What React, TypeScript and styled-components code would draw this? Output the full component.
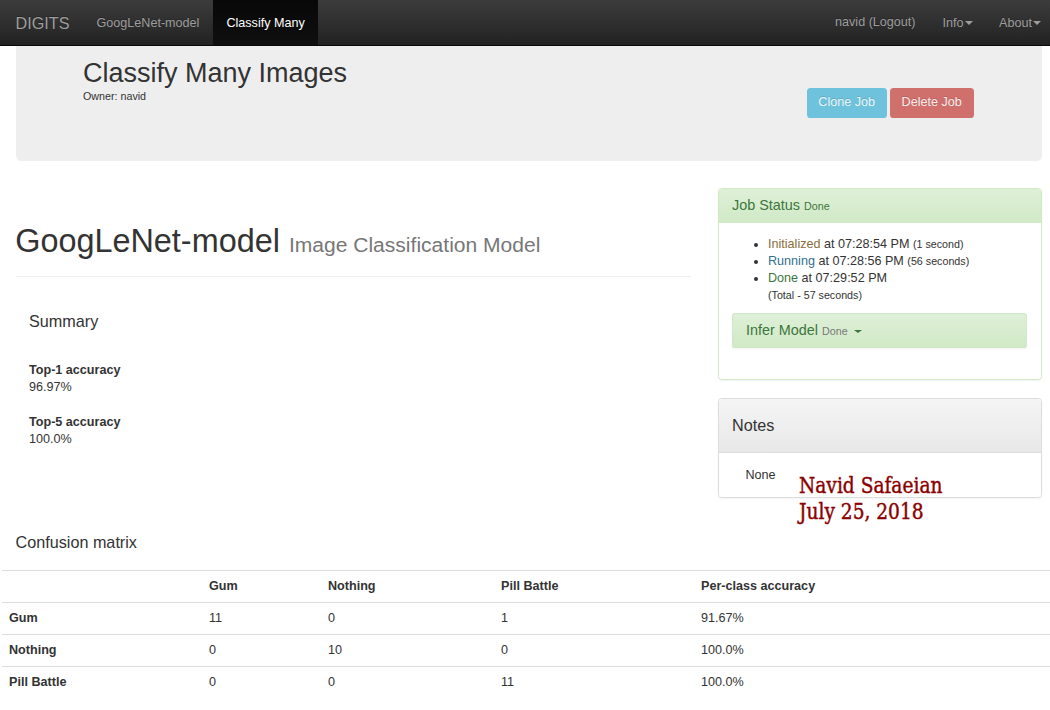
import React from "react";
import styled, { createGlobalStyle } from "styled-components";

const Global = createGlobalStyle`
  * { box-sizing: border-box; }
  html { overflow: hidden; }
  body {
    margin: 0;
    background: #fff;
    color: #333;
    font: 12.6px/17px "Liberation Sans", Arial, sans-serif;
    height: 710px;
    overflow: hidden;
  }
`;

const Navbar = styled.nav`
  display: flex;
  height: 46px;
  background: linear-gradient(#3c3c3c, #222);
  border-bottom: 1px solid #080808;
  color: #9d9d9d;
  text-shadow: 0 -1px 0 rgba(0, 0, 0, 0.25);
  white-space: nowrap;
`;

const Brand = styled.div`
  width: 83px;
  padding: 14px 0 0 15.5px;
  font-size: 16.2px;
  line-height: 18px;
`;

const NavItem = styled.div<{ $active?: boolean }>`
  padding: 15px 13.5px 0;
  color: ${(p) => (p.$active ? "#fff" : "#9d9d9d")};
  background: ${(p) => (p.$active ? "linear-gradient(#080808, #0f0f0f)" : "none")};
`;

const NavRight = styled.div`
  display: flex;
  margin-left: auto;
  padding-right: 9px;
`;

const NavText = styled.div`
  padding: 14px 13.5px 0;
`;

const Dropdown = styled.div`
  display: flex;
  gap: 1px;
  padding: 15px 0 0 13.5px;
  margin-right: 13px;
  &:last-child { margin-right: 0; }
`;

const Caret = styled.span`
  width: 0;
  height: 0;
  margin-top: 6px;
  border-top: 4px solid currentColor;
  border-left: 4px solid transparent;
  border-right: 4px solid transparent;
`;

const SmallCaret = styled(Caret)`
  display: inline-block;
  vertical-align: 2px;
  margin: 0 0 0 6px;
  border-width: 3px 4px 0;
`;

const Jumbotron = styled.header`
  display: flex;
  justify-content: space-between;
  height: 115px;
  margin: 0 8px 0 16px;
  padding: 12px 68px 0 67px;
  background: #eee;
  border-radius: 0 0 5.4px 5.4px;
`;

const PageTitle = styled.h2`
  margin: 0;
  font-size: 27px;
  line-height: 30px;
  font-weight: 400;
`;

const Small = styled.small`
  font-size: 10.71px;
`;

const Owner = styled.div`
  font-size: 10.71px;
  line-height: 16px;
`;

const Buttons = styled.div`
  display: flex;
  gap: 3px;
  margin-top: 30px;
`;

const Button = styled.button<{ $color: string; $width: number }>`
  width: ${(p) => p.$width}px;
  height: 30px;
  padding: 0 0.6px 2px 0;
  border: 0;
  border-radius: 3.6px;
  background: ${(p) => p.$color};
  color: rgba(255, 255, 255, 0.9);
  font: inherit;
  text-shadow: 0 -1px 0 rgba(0, 0, 0, 0.15);
`;

const Columns = styled.div`
  display: flex;
  justify-content: space-between;
  height: 345px;
  padding: 27px 8px 0 16px;
`;

const Main = styled.main`
  width: 675px;
`;

const ModelTitle = styled.h1`
  margin: 35px 0 0;
  height: 54px;
  border-bottom: 1px solid #eee;
  font-size: 32.4px;
  line-height: 36px;
  font-weight: 400;
  text-indent: -0.8px;
  small { font-size: 21.06px; color: #777; }
`;

const Summary = styled.section`
  padding: 34px 13px 0;
`;

const Heading = styled.h4`
  margin: 0;
  font-size: 16.2px;
  line-height: 20px;
  font-weight: 400;
`;

const Metrics = styled.dl`
  margin: 31px 0 0;
  dt { font-weight: 700; }
  dd { margin: 0 0 18px; }
`;

const Side = styled.aside`
  width: 324px;
`;

const Panel = styled.section<{ $success?: boolean }>`
  height: ${(p) => (p.$success ? 192 : 100)}px;
  margin-bottom: 18px;
  border: 1px solid ${(p) => (p.$success ? "#d0e9c6" : "#ddd")};
  border-radius: 3.6px;
  box-shadow: 0 1px 2px rgba(0, 0, 0, 0.05);
`;

const StatusHead = styled.div`
  height: 34px;
  padding: 7px 13px 0;
  border-radius: 2.6px 2.6px 0 0;
  background: linear-gradient(#dff0d8, #d0e9c6);
  color: #3c763d;
  font-size: 14.4px;
  line-height: 18px;
`;

const NotesHead = styled.div`
  height: 54px;
  padding: 16px 13px 0;
  border-bottom: 1px solid #ddd;
  border-radius: 2.6px 2.6px 0 0;
  background: linear-gradient(#f5f5f5, #e8e8e8);
`;

const NotesBody = styled.div`
  padding: 14px 26.5px;
`;

const History = styled.ul`
  margin: 13px 0 9px;
  padding: 0 0 0 49px;
  white-space: nowrap;
`;

const State = styled.span<{ $color: string }>`
  color: ${(p) => p.$color};
`;

const Task = styled.div`
  height: 35px;
  margin: 0 14px 0 13px;
  padding: 8px 14px 0;
  border-radius: 3.6px;
  background: linear-gradient(#dff0d8, #d0e9c6);
  box-shadow: inset 0 0 0 1px #d0e9c6, 0 1px 2px rgba(0, 0, 0, 0.05);
  color: #3c763d;
  font-size: 14.4px;
  line-height: 18px;
  small { color: #777; }
`;

const Matrix = styled.section`
  padding: 26px 0 0 2px;
  h4 { padding-left: 13.5px; }
`;

const Table = styled.table`
  width: 1048px;
  margin-top: 18px;
  border-collapse: separate;
  border-spacing: 0;
  table-layout: fixed;
  th, td {
    height: 32px;
    padding: 0 7px 1px;
    border-top: 1px solid #ddd;
    text-align: left;
  }
`;

const Signature = styled.div`
  position: absolute;
  left: 799px;
  top: 473px;
  color: #8b0000;
  font: 22px/26px "DejaVu Serif Condensed", "DejaVu Serif", serif;
  font-stretch: condensed;
  -webkit-text-stroke: 0.4px #8b0000;
  white-space: nowrap;
`;

const SignatureLine = styled.div<{ $scale: number }>`
  transform: scaleX(${(p) => p.$scale});
  transform-origin: 0 0;
`;

const classes = ["Gum", "Nothing", "Pill Battle"];
const rows = [
  ["11", "0", "1", "91.67%"],
  ["0", "10", "0", "100.0%"],
  ["0", "0", "11", "100.0%"],
];
const columnWidths = [200, 119, 173, 200, 356];

export default function App() {
  return (
    <>
      <Global />
      <Navbar>
        <Brand>DIGITS</Brand>
        <NavItem>GoogLeNet-model</NavItem>
        <NavItem $active>Classify Many</NavItem>
        <NavRight>
          <NavText>navid (Logout)</NavText>
          <Dropdown>Info<Caret /></Dropdown>
          <Dropdown>About<Caret /></Dropdown>
        </NavRight>
      </Navbar>
      <Jumbotron>
        <div>
          <PageTitle>Classify Many Images</PageTitle>
          <Owner>Owner: navid</Owner>
        </div>
        <Buttons>
          <Button $color="#6fc2dc" $width={80}>Clone Job</Button>
          <Button $color="#d0706d" $width={84}>Delete Job</Button>
        </Buttons>
      </Jumbotron>
      <Columns>
        <Main>
          <ModelTitle>GoogLeNet-model <small>Image Classification Model</small></ModelTitle>
          <Summary>
            <Heading>Summary</Heading>
            <Metrics>
              <dt>Top-1 accuracy</dt>
              <dd>96.97%</dd>
              <dt>Top-5 accuracy</dt>
              <dd>100.0%</dd>
            </Metrics>
          </Summary>
        </Main>
        <Side>
          <Panel $success>
            <StatusHead>Job Status <Small>Done</Small></StatusHead>
            <History>
              <li><State $color="#8a6d3b">Initialized</State> at 07:28:54 PM <Small>(1 second)</Small></li>
              <li><State $color="#31708f">Running</State> at 07:28:56 PM <Small>(56 seconds)</Small></li>
              <li><State $color="#3c763d">Done</State> at 07:29:52 PM<br /><Small>(Total - 57 seconds)</Small></li>
            </History>
            <Task>Infer Model <Small>Done</Small><SmallCaret /></Task>
          </Panel>
          <Panel>
            <NotesHead><Heading>Notes</Heading></NotesHead>
            <NotesBody>None</NotesBody>
          </Panel>
        </Side>
      </Columns>
      <Matrix>
        <Heading>Confusion matrix</Heading>
        <Table>
          <colgroup>{columnWidths.map((w, i) => <col key={i} width={w} />)}</colgroup>
          <thead>
            <tr><th />{classes.map((c) => <th key={c}>{c}</th>)}<th>Per-class accuracy</th></tr>
          </thead>
          <tbody>
            {rows.map((row, i) => (
              <tr key={classes[i]}>
                <th>{classes[i]}</th>
                {row.map((value, j) => <td key={j}>{value}</td>)}
              </tr>
            ))}
          </tbody>
        </Table>
      </Matrix>
      <Signature>
        <SignatureLine $scale={0.94}>Navid Safaeian</SignatureLine>
        <SignatureLine $scale={0.94}>July 25, 2018</SignatureLine>
      </Signature>
    </>
  );
}
